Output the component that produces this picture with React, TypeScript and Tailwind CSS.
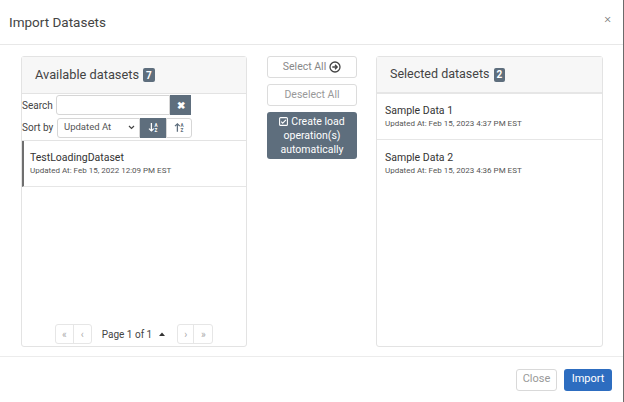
import React from "react";

const slate = "bg-[#5e6e7d]";

function Badge({ n }: { n: number }) {
  return (
    <span className={`ml-[4px] inline-flex h-[14px] min-w-[11px] items-center justify-center rounded-[2px] ${slate} px-[3px] text-[10px] font-bold text-white`}>
      {n}
    </span>
  );
}

function SortDescIcon() {
  return (
    <svg width="11" height="11" viewBox="0 0 12 12" fill="white">
      <path d="M3 1h1.4v7.2l1.5-1.5.9.9L3.7 10.7.6 7.6l.9-.9L3 8.2z" />
      <text x="7" y="5" fontSize="5" fontWeight="bold" fill="white" fontFamily="Roboto, sans-serif">A</text>
      <text x="7" y="11" fontSize="5" fontWeight="bold" fill="white" fontFamily="Roboto, sans-serif">Z</text>
    </svg>
  );
}

function SortAscIcon() {
  return (
    <svg width="11" height="11" viewBox="0 0 12 12" fill="#5e6e7d">
      <path d="M3 10.7h1.4V3.5l1.5 1.5.9-.9L3.7 1 .6 4.1l.9.9L3 3.5z" />
      <text x="7" y="5" fontSize="5" fontWeight="bold" fill="#5e6e7d" fontFamily="Roboto, sans-serif">A</text>
      <text x="7" y="11" fontSize="5" fontWeight="bold" fill="#5e6e7d" fontFamily="Roboto, sans-serif">Z</text>
    </svg>
  );
}

function Item({ name, date, active, last }: { name: string; date: string; active?: boolean; last?: boolean }) {
  return (
    <div
      className={`flex h-[46px] flex-col justify-center ${last ? "" : "border-b border-[#e6e6e6]"} ${
        active ? "border-l-2 border-l-[#6f6f6f] pl-[6px]" : "pl-[8px]"
      }`}
    >
      <div className="text-[10.5px] leading-[15px] text-[#333]">{name}</div>
      <div className="text-[8px] leading-[12px] text-[#555]">{date}</div>
    </div>
  );
}

export default function App() {
  return (
    <div
      className="flex h-[402px] w-[624px] flex-col border-r border-[#6b6b6b] bg-white text-[#333]"
      style={{ fontFamily: "Roboto, 'Liberation Sans', sans-serif" }}
    >
      {/* header */}
      <div className="flex h-[45px] items-center justify-between border-b border-[#e8e8e8] pl-[9px] pr-[12px]">
        <h1 className="text-[13.5px] font-normal text-[#444]">Import Datasets</h1>
        <span className="-mt-[8px] text-[13px] font-light leading-none text-[#777]">×</span>
      </div>

      {/* body */}
      <div className="flex h-[312px] gap-[20px] border-b border-[#ececec] pl-[21px] pt-[11px]">
        {/* available */}
        <div className="flex h-[291px] w-[226px] flex-col rounded-[3px] border border-[#e3e3e3]">
          <div className="flex h-[37px] items-center border-b border-[#e3e3e3] bg-[#f7f7f7] pl-[13px] text-[12.8px] text-[#444]">
            Available datasets <Badge n={7} />
          </div>
          <div className="mt-[1px] flex h-[20px] items-center">
            <span className="w-[34px] text-[10px] text-[#444]">Search</span>
            <input className="h-[20px] w-[114px] rounded-l-[3px] border border-[#d6d6d6] outline-none" />
            <button className={`flex h-[20px] w-[21px] items-center justify-center ${slate} text-[10px] font-bold text-white`}>✖</button>
          </div>
          <div className="mt-[2px] flex h-[21px] items-center">
            <span className="w-[35px] text-[10px] text-[#444]">Sort by</span>
            <div className="flex h-[20px] w-[83px] items-center justify-between rounded-l-[3px] border border-[#d6d6d6] pl-[6px] pr-[4px] text-[9.5px] text-[#555]">
              Updated At
              <svg width="7" height="5" viewBox="0 0 7 5"><path d="M1 1l2.5 2.5L6 1" stroke="#444" strokeWidth="1.2" fill="none" /></svg>
            </div>
            <button className={`flex h-[20px] w-[26px] items-center justify-center ${slate}`}><SortDescIcon /></button>
            <button className="flex h-[20px] w-[26px] items-center justify-center rounded-r-[3px] border border-[#d6d6d6]"><SortAscIcon /></button>
          </div>
          <div className="mt-[2px] border-t border-[#e3e3e3]">
            <Item name="TestLoadingDataset" date="Updated At: Feb 15, 2022 12:09 PM EST" active />
          </div>
          <div className="mt-auto mb-[2px] flex items-center justify-center text-[#aaa]">
            <div className="flex h-[20px] overflow-hidden rounded-[3px] border border-[#e6e6e6] text-[10px]">
              <span className="flex w-[18px] items-center justify-center border-r border-[#e6e6e6]">«</span>
              <span className="flex w-[17px] items-center justify-center">‹</span>
            </div>
            <span className="ml-[10px] mr-[12px] flex items-center gap-[7px] text-[10px] text-[#444]">
              Page 1 of 1
              <svg width="6" height="4" viewBox="0 0 6 4"><path d="M0 4L3 0.5L6 4z" fill="#333" /></svg>
            </span>
            <div className="flex h-[20px] overflow-hidden rounded-[3px] border border-[#e6e6e6] text-[10px]">
              <span className="flex w-[16px] items-center justify-center border-r border-[#e6e6e6]">›</span>
              <span className="flex w-[18px] items-center justify-center">»</span>
            </div>
          </div>
        </div>

        {/* middle */}
        <div className="flex w-[90px] flex-col gap-[6px]">
          <button className="flex h-[22px] items-center justify-center gap-[3px] rounded-[3px] border border-[#dcdcdc] text-[10.5px] text-[#888]">
            Select All
            <svg width="12" height="12" viewBox="0 0 12 12"><circle cx="6" cy="6" r="5" stroke="#444" strokeWidth="1.3" fill="none" /><path d="M3.3 6h4.6M6 3.8 8.2 6 6 8.2" stroke="#444" strokeWidth="1.3" fill="none" /></svg>
          </button>
          <button className="flex h-[22px] items-center justify-center rounded-[3px] border border-[#dcdcdc] text-[10.5px] text-[#999]">
            Deselect All
          </button>
          <button className={`flex h-[47px] flex-col items-center justify-center rounded-[3px] ${slate} text-[10.5px] leading-[14px] text-white`}>
            <span className="flex items-center gap-[3px]">
              <svg width="9" height="9" viewBox="0 0 9 9"><rect x="0.6" y="0.6" width="7.8" height="7.8" rx="1" stroke="white" strokeWidth="1.1" fill="none" /><path d="M2.2 4.6l1.5 1.5L6.9 2.8" stroke="white" strokeWidth="1.1" fill="none" /></svg>
              Create load
            </span>
            <span>operation(s)</span>
            <span>automatically</span>
          </button>
        </div>

        {/* selected */}
        <div className="-ml-[1px] flex h-[291px] w-[227px] flex-col rounded-[3px] border border-[#e3e3e3]">
          <div className="flex h-[37px] items-center border-b-2 border-[#e6e6e6] bg-[#f7f7f7] pl-[13px] text-[12.5px] text-[#444]">
            Selected datasets <Badge n={2} />
          </div>
          <Item name="Sample Data 1" date="Updated At: Feb 15, 2023 4:37 PM EST" />
          <Item name="Sample Data 2" date="Updated At: Feb 15, 2023 4:36 PM EST" last />
        </div>
      </div>

      {/* footer */}
      <div className="flex flex-1 items-center justify-end gap-[7px] pr-[11px]">
        <button className="h-[22px] w-[41px] rounded-[3px] border border-[#d9d9d9] text-[11px] text-[#999]">Close</button>
        <button className="h-[22px] w-[48px] rounded-[3px] bg-[#2d6dc0] text-[11px] text-white">Import</button>
      </div>
    </div>
  );
}
